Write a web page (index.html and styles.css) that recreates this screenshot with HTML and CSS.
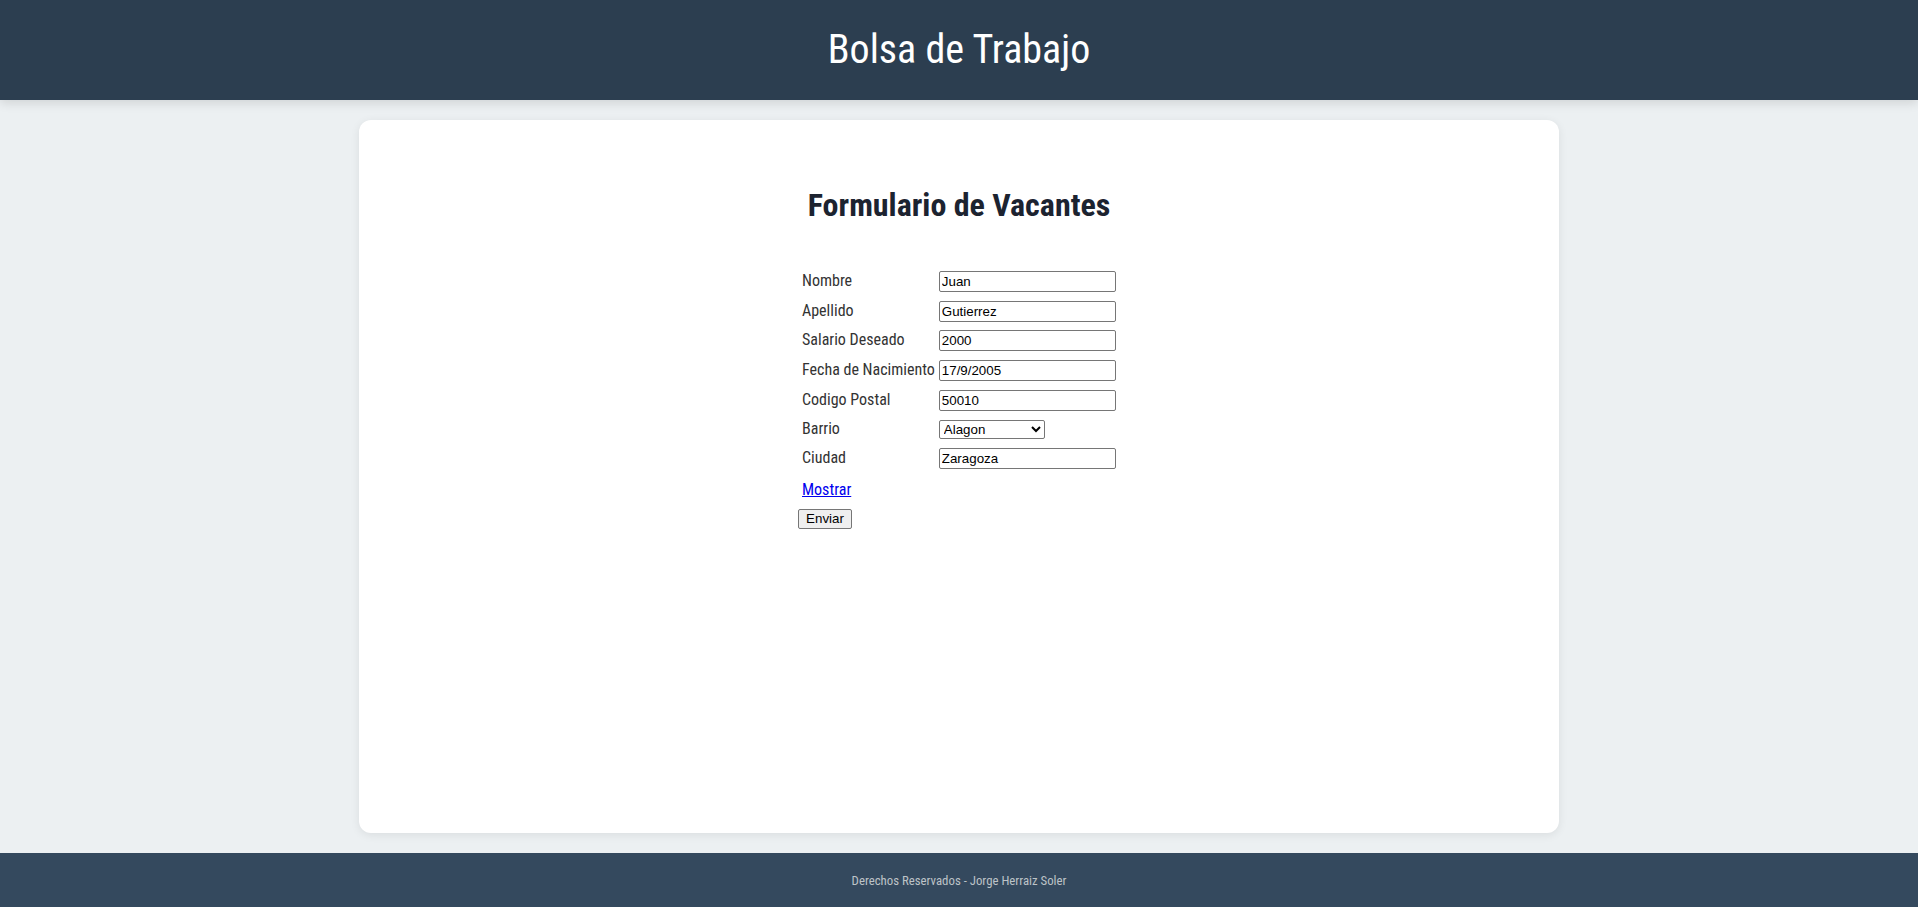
FILE: index.html
```html
<!DOCTYPE html>
<html lang="es">
<head>
<meta charset="utf-8">
<title>Bolsa de Trabajo</title>
<link rel="stylesheet" href="styles.css">
</head>
<body>
<header class="site-header">
  <h1 class="site-title">Bolsa de Trabajo</h1>
</header>
<main class="main">
  <section class="card">
    <h2 class="form-title">Formulario de Vacantes</h2>
    <form class="vacancy-form">
      <div class="fields">
        <label class="field-label" for="nombre">Nombre</label>
        <input class="field-input" id="nombre" type="text" value="Juan">
        <label class="field-label" for="apellido">Apellido</label>
        <input class="field-input" id="apellido" type="text" value="Gutierrez">
        <label class="field-label" for="salario">Salario Deseado</label>
        <input class="field-input" id="salario" type="text" value="2000">
        <label class="field-label" for="fecha">Fecha de Nacimiento</label>
        <input class="field-input" id="fecha" type="text" value="17/9/2005">
        <label class="field-label" for="cp">Codigo Postal</label>
        <input class="field-input" id="cp" type="text" value="50010">
        <label class="field-label" for="barrio">Barrio</label>
        <div class="select-cell">
          <select class="field-select" id="barrio">
            <option>Alagon</option>
            <option>Delicias</option>
            <option>Actur</option>
          </select>
        </div>
        <label class="field-label" for="ciudad">Ciudad</label>
        <input class="field-input" id="ciudad" type="text" value="Zaragoza">
      </div>
      <a class="show-link" href="#">Mostrar</a>
      <div class="actions">
        <button class="submit-btn" type="submit">Enviar</button>
      </div>
    </form>
  </section>
</main>
<footer class="site-footer">
  <p class="footer-text">Derechos Reservados - Jorge Herraiz Soler</p>
</footer>
</body>
</html>
```
FILE: styles.css
```css
* { box-sizing: border-box; }
html, body { margin: 0; padding: 0; }
body {
  height: 100vh;
  overflow: hidden;
  display: flex;
  flex-direction: column;
  background: #ecf0f2;
  font-family: "Roboto Condensed", Roboto, "Liberation Sans", sans-serif;
  font-stretch: condensed;
  color: #333;
}
.site-header {
  flex: 0 0 100px;
  height: 100px;
  background: #2c3e50;
  display: flex;
  align-items: center;
  justify-content: center;
  box-shadow: 0 3px 10px rgba(0,0,0,0.12);
  position: relative;
  z-index: 1;
  padding-bottom: 2px;
}
.site-title {
  margin: 0;
  color: #fff;
  font-size: 40px;
  font-weight: 400;
}
.main {
  flex: 1 1 auto;
  min-height: 0;
  padding: 20px 0;
  display: flex;
  justify-content: center;
}
.card {
  width: 1200px;
  background: #fff;
  border-radius: 12px;
  box-shadow: 0 2px 10px rgba(0,0,0,0.08);
  padding-top: 66px;
}
.form-title {
  margin: 0;
  text-align: center;
  font-size: 32px;
  font-weight: 700;
  color: #1c2330;
}
.vacancy-form {
  width: 322px;
  margin: 47px auto 0;
}
.fields {
  display: grid;
  grid-template-columns: max-content max-content;
  column-gap: 4px;
  row-gap: 8.7px;
  align-items: baseline;
  padding-left: 4px;
}
.field-label {
  font-size: 16px;
  color: #333;
}
.field-input, .field-select {
  font-family: "Liberation Sans", Arial, sans-serif;
  font-size: 13.333px;
  color: #000;
}
.field-input {
  width: 177px;
  height: 21px;
  padding: 1px 2px;
  border: 1px solid #767676;
  border-radius: 2px;
  background: #fff;
}
.field-select {
  width: 106px;
  height: 19px;
  border: 1px solid #767676;
  border-radius: 2px;
  background: #fff;
}
.show-link {
  display: inline-block;
  margin-top: 11px;
  margin-left: 4px;
  font-size: 16px;
  color: #0000ee;
  text-decoration: underline;
}
.actions {
  margin-top: 9px;
}
.submit-btn {
  font-family: "Liberation Sans", Arial, sans-serif;
  font-size: 13.333px;
  width: 54px;
  height: 20px;
  padding: 1px 6px;
  border: 1px solid #767676;
  border-radius: 2px;
  background: #efefef;
  color: #000;
}
.site-footer {
  flex: 0 0 54px;
  height: 54px;
  background: #34495e;
  display: flex;
  align-items: center;
  justify-content: center;
}
.footer-text {
  margin: 0;
  font-size: 12.8px;
  color: #bdc3c7;
}
```
